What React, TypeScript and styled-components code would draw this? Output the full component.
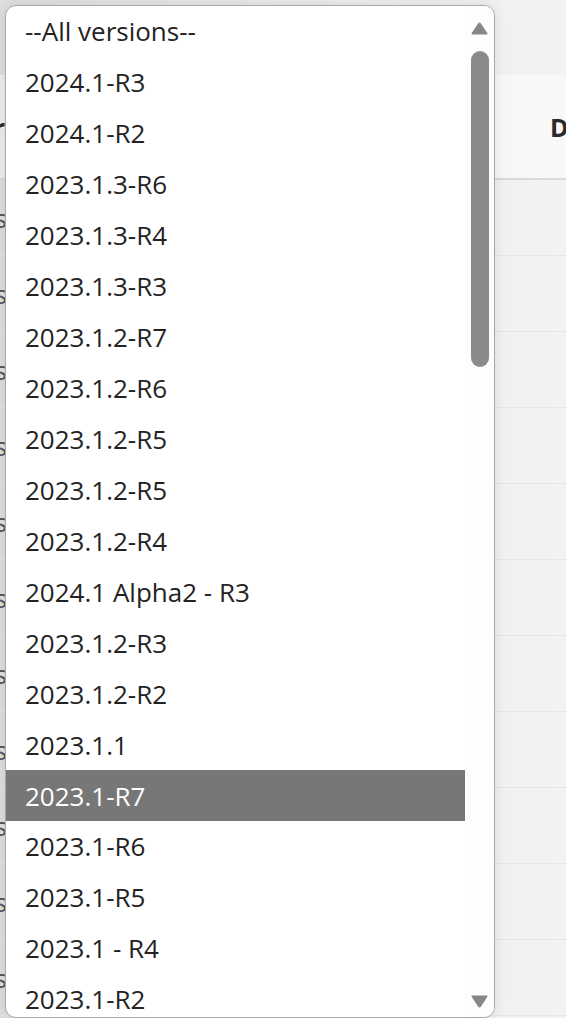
import React from 'react';
import styled, { createGlobalStyle } from 'styled-components';

const versions = [
  '--All versions--',
  '2024.1-R3',
  '2024.1-R2',
  '2023.1.3-R6',
  '2023.1.3-R4',
  '2023.1.3-R3',
  '2023.1.2-R7',
  '2023.1.2-R6',
  '2023.1.2-R5',
  '2023.1.2-R5',
  '2023.1.2-R4',
  '2024.1 Alpha2 - R3',
  '2023.1.2-R3',
  '2023.1.2-R2',
  '2023.1.1',
  '2023.1-R7',
  '2023.1-R6',
  '2023.1-R5',
  '2023.1 - R4',
  '2023.1-R2',
];

const selected = '2023.1-R7';
const tableRows = 11;

export default function App() {
  return (
    <>
      <GlobalStyle />
      <Page>
        <Table>
          <HeadRow>
            <EdgeCell>
              <HeadText>Number</HeadText>
            </EdgeCell>
            <MidCell />
            <HeadCell>
              <HeadText>Date</HeadText>
            </HeadCell>
          </HeadRow>
          {Array.from({ length: tableRows }).map((_, i) => (
            <BodyRow key={i}>
              <EdgeCell>
                <CellText>{i % 2 === 0 ? 'Versions' : 'Details'}</CellText>
              </EdgeCell>
              <MidCell />
              <HeadCell />
            </BodyRow>
          ))}
        </Table>

        <Popup>
          <List>
            {versions.map((v, i) => (
              <Option key={i} $active={v === selected}>
                {v}
              </Option>
            ))}
          </List>
          <Scrollbar>
            <Arrow viewBox="0 0 17 13">
              <path d="M8.5 0.5 Q9.3 0.5 9.8 1.3 L16.4 11.2 Q17 12.5 15.6 12.5 L1.4 12.5 Q0 12.5 0.6 11.2 L7.2 1.3 Q7.7 0.5 8.5 0.5 Z" />
            </Arrow>
            <Track>
              <Thumb />
            </Track>
            <Arrow viewBox="0 0 17 13">
              <path d="M8.5 12.5 Q9.3 12.5 9.8 11.7 L16.4 1.8 Q17 0.5 15.6 0.5 L1.4 0.5 Q0 0.5 0.6 1.8 L7.2 11.7 Q7.7 12.5 8.5 12.5 Z" />
            </Arrow>
          </Scrollbar>
        </Popup>
      </Page>
    </>
  );
}

const GlobalStyle = createGlobalStyle`
  html, body {
    margin: 0;
    padding: 0;
    overflow: hidden;
  }
  body {
    font-family: 'Open Sans', 'Noto Sans', sans-serif;
    background: #f1f1f1;
  }
`;

const Page = styled.div`
  position: relative;
  width: 566px;
  height: 1018px;
  overflow: hidden;
  background: linear-gradient(90deg, #dedede 0%, #ececec 55%, #f3f3f3 100%);
`;

const Table = styled.div`
  display: flex;
  flex-direction: column;
  padding-top: 75px;
`;

const HeadRow = styled.div`
  display: grid;
  grid-template-columns: 5px 545px 1fr;
  height: 103px;
  align-items: center;
  background: rgba(255, 255, 255, 0.45);
  border-bottom: 2px solid #d8d8d8;
`;

const BodyRow = styled.div`
  display: grid;
  grid-template-columns: 5px 545px 1fr;
  height: 75px;
  align-items: center;
  border-bottom: 1px solid #e6e6e6;
`;

const EdgeCell = styled.div`
  display: flex;
  justify-content: flex-end;
  overflow: hidden;
  white-space: nowrap;
`;

const MidCell = styled.div``;

const HeadCell = styled.div`
  display: flex;
  overflow: hidden;
  white-space: nowrap;
`;

const HeadText = styled.span`
  font-size: 25px;
  font-weight: 700;
  color: #2a2a2a;
`;

const CellText = styled.span`
  font-size: 25px;
  color: #555;
  margin-right: -2px;
`;

const Popup = styled.div`
  position: absolute;
  left: 5px;
  top: 5px;
  width: 488px;
  height: 1011px;
  display: flex;
  background: #fff;
  border: 1px solid #a9a9a9;
  border-radius: 11px;
  overflow: hidden;
  box-shadow: 0 0 14px rgba(0, 0, 0, 0.1);
`;

const List = styled.div`
  flex: 1;
  display: flex;
  flex-direction: column;
  overflow: hidden;
`;

const Option = styled.div<{ $active: boolean }>`
  flex: none;
  height: 50.95px;
  display: flex;
  align-items: center;
  padding-left: 19px;
  font-size: 26px;
  white-space: nowrap;
  color: ${(p) => (p.$active ? '#ffffff' : '#232323')};
  background: ${(p) => (p.$active ? '#777777' : 'transparent')};
`;

const Scrollbar = styled.div`
  width: 29px;
  display: flex;
  flex-direction: column;
  align-items: center;
  padding: 16px 0 9px;
  background: #fdfdfd;
`;

const Arrow = styled.svg`
  width: 17px;
  height: 13px;
  flex: none;
  fill: #878787;
`;

const Track = styled.div`
  flex: 1;
  width: 100%;
  display: flex;
  justify-content: center;
  padding-top: 16px;
`;

const Thumb = styled.div`
  width: 18px;
  height: 316px;
  border-radius: 9px;
  background: #8a8a8a;
`;
